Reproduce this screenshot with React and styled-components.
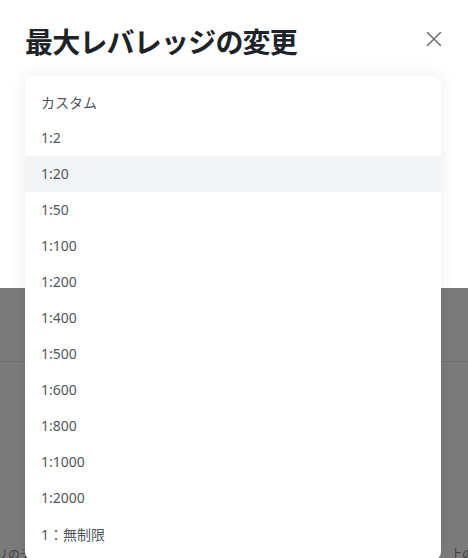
import React from 'react'
import styled, { createGlobalStyle } from 'styled-components'

const GlobalStyle = createGlobalStyle`
  html, body {
    margin: 0;
    padding: 0;
    background: #7b7b7b;
    font-family: "Noto Sans", "Noto Sans CJK JP", sans-serif;
  }
`

const Screen = styled.div`
  position: relative;
  width: 468px;
  height: 558px;
  overflow: hidden;
  display: flex;
  flex-direction: column;
`

const Sheet = styled.section`
  flex-shrink: 0;
  height: 288px;
  box-sizing: border-box;
  padding: 24px 26px 0 25px;
  background: #fff;
`

const Header = styled.header`
  display: flex;
  justify-content: space-between;
  align-items: center;
  height: 34px;
`

const Title = styled.h2`
  margin: 0;
  font-family: "Noto Sans CJK JP", sans-serif;
  font-size: 28px;
  line-height: 34px;
  font-weight: 700;
  color: #1e2329;
  letter-spacing: -0.8px;
`

const CloseButton = styled.button`
  display: flex;
  align-items: center;
  justify-content: center;
  width: 16px;
  height: 16px;
  padding: 0;
  margin-top: -4px;
  border: 0;
  background: none;
  color: #707070;
  cursor: pointer;
`

const Backdrop = styled.div`
  flex: 1;
  min-height: 0;
  overflow: hidden;
  display: flex;
  flex-direction: column;
  background: #7b7b7b;
`

const BackdropRow = styled.div`
  flex-shrink: 0;
  height: 73px;
  border-bottom: 1px solid #6e6e6e;
`

const BackdropFooter = styled.div`
  flex-shrink: 0;
  display: flex;
  justify-content: space-between;
  padding: 185px 0 0;
  font-family: "Noto Sans CJK JP", sans-serif;
  font-size: 12px;
  line-height: 14px;
  color: #3f3f3f;
  span:first-child {
    margin-left: -4px;
  }
  span:last-child {
    margin-right: -6px;
  }
`

const Menu = styled.ul`
  position: absolute;
  top: 76px;
  left: 25px;
  width: 416px;
  margin: 0;
  padding: 8px 0;
  list-style: none;
  background: #fff;
  border-radius: 8px;
  box-shadow: 0 0 20px rgba(0, 0, 0, 0.08);
`

const MenuItem = styled.li`
  height: 36px;
  padding: 0 16px 1px;
  box-sizing: border-box;
  display: flex;
  align-items: center;
  font-size: 14px;
  color: #50565f;
  background: ${props => (props.active ? '#f3f4f5' : 'transparent')};
  cursor: pointer;
`

const options = [
  'カスタム',
  '1:2',
  '1:20',
  '1:50',
  '1:100',
  '1:200',
  '1:400',
  '1:500',
  '1:600',
  '1:800',
  '1:1000',
  '1:2000',
  '1：無制限'
]

const CloseIcon = () => (
  <svg width="16" height="16" viewBox="0 0 16 16" fill="none">
    <path d="M1.5 1.5l13 13M14.5 1.5l-13 13" stroke="currentColor" strokeWidth="1.6" strokeLinecap="round" />
  </svg>
)

export default function App() {
  return (
    <Screen>
      <GlobalStyle />
      <Sheet>
        <Header>
          <Title>最大レバレッジの変更</Title>
          <CloseButton aria-label="close">
            <CloseIcon />
          </CloseButton>
        </Header>
      </Sheet>
      <Backdrop>
        <BackdropRow />
        <BackdropFooter>
          <span>リのテ</span>
          <span>上の</span>
        </BackdropFooter>
      </Backdrop>
      <Menu>
        {options.map(o => (
          <MenuItem key={o} active={o === '1:20'}>
            {o}
          </MenuItem>
        ))}
      </Menu>
    </Screen>
  )
}
